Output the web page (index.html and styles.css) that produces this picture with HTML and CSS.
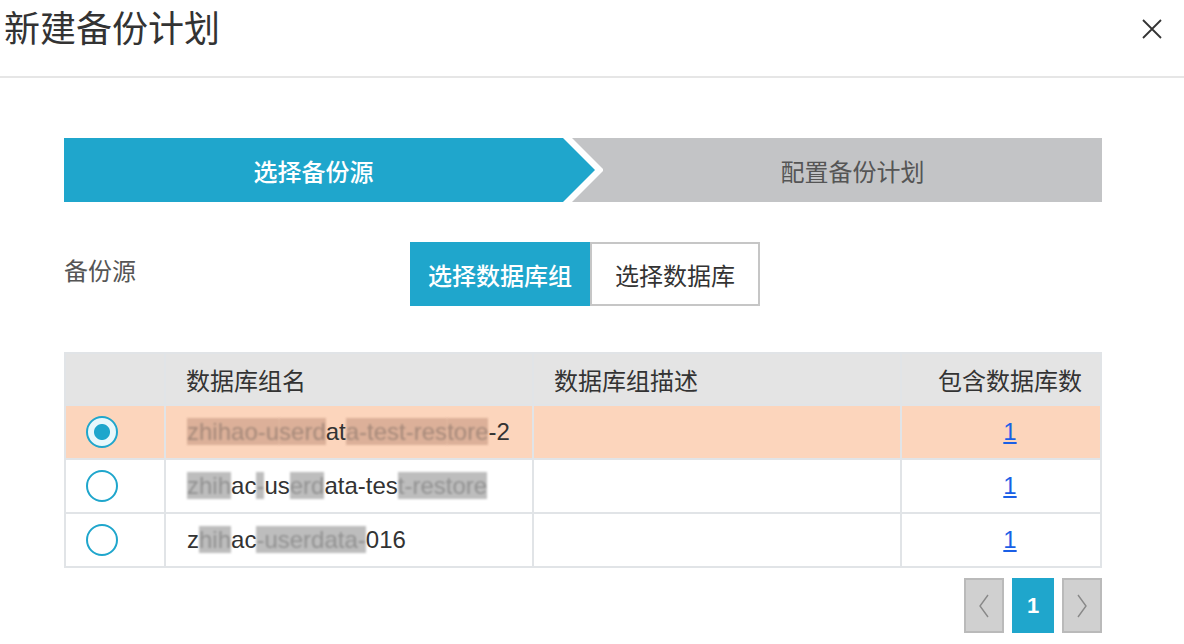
FILE: index.html
```html
<!DOCTYPE html>
<html lang="zh-CN">
<head>
<meta charset="utf-8">
<title>新建备份计划</title>
<link rel="stylesheet" href="styles.css">
</head>
<body>
<div class="dialog">
  <header class="dlg-head">
    <h1 class="dlg-title">新建备份计划</h1>
    <button class="close" aria-label="关闭">
      <svg width="20" height="20" viewBox="0 0 20 20"><path d="M1 1 L19 19 M19 1 L1 19" stroke="#333" stroke-width="1.8" fill="none"/></svg>
    </button>
  </header>
  <main class="dlg-body">
    <div class="steps">
      <div class="step step-active"><span class="step-text">选择备份源</span></div>
      <div class="step step-next"><span class="step-text">配置备份计划</span></div>
    </div>

    <div class="form-row">
      <div class="form-label">备份源</div>
      <div class="seg">
        <button class="seg-btn seg-on">选择数据库组</button>
        <button class="seg-btn seg-off">选择数据库</button>
      </div>
    </div>

    <table class="grid">
      <colgroup>
        <col class="c-radio"><col class="c-name"><col class="c-desc"><col class="c-count">
      </colgroup>
      <thead>
        <tr>
          <th></th>
          <th class="th-left">数据库组名</th>
          <th class="th-left">数据库组描述</th>
          <th class="th-right">包含数据库数</th>
        </tr>
      </thead>
      <tbody>
        <tr class="row-sel">
          <td class="td-radio"><span class="radio radio-on"></span></td>
          <td class="td-name"><span class="m">zhihao-u</span><span class="m">serd</span>at<span class="m">a-test-res</span><span class="m">tore</span>-2</td>
          <td></td>
          <td class="td-count"><a href="#" class="link">1</a></td>
        </tr>
        <tr>
          <td class="td-radio"><span class="radio"></span></td>
          <td class="td-name"><span class="m">zhih</span>ac<span class="m">-</span>us<span class="m">erd</span>ata-tes<span class="m">t-restore</span></td>
          <td></td>
          <td class="td-count"><a href="#" class="link">1</a></td>
        </tr>
        <tr>
          <td class="td-radio"><span class="radio"></span></td>
          <td class="td-name">z<span class="m">hih</span>ac<span class="m">-userdata-</span>016</td>
          <td></td>
          <td class="td-count"><a href="#" class="link">1</a></td>
        </tr>
      </tbody>
    </table>

    <div class="pager">
      <button class="pg pg-nav" aria-label="上一页">
        <svg width="12" height="24" viewBox="0 0 12 24"><polyline points="10,1 2,12 10,23" fill="none" stroke="#888" stroke-width="1.4"/></svg>
      </button>
      <button class="pg pg-cur">1</button>
      <button class="pg pg-nav" aria-label="下一页">
        <svg width="12" height="24" viewBox="0 0 12 24"><polyline points="2,1 10,12 2,23" fill="none" stroke="#888" stroke-width="1.4"/></svg>
      </button>
    </div>
  </main>
</div>
</body>
</html>
```

FILE: styles.css
```css
html, body {
  margin: 0;
  padding: 0;
  background: #fff;
}
body {
  font-family: "Liberation Sans", "Noto Sans CJK SC", sans-serif;
  color: #333;
}
.dialog {
  width: 1184px;
  height: 644px;
  overflow: hidden;
}
.dlg-head {
  height: 76px;
  border-bottom: 2px solid #e6e6e6;
  display: flex;
  justify-content: space-between;
  align-items: flex-start;
  padding: 0 22px 0 4px;
}
.dlg-title {
  margin: 12px 0 0 0;
  font-size: 36px;
  line-height: 36px;
  font-weight: normal;
  color: #333;
}
.close {
  margin-top: 19px;
  padding: 0;
  border: 0;
  background: transparent;
  width: 20px;
  height: 20px;
  display: block;
}
.close svg { display: block; }

.dlg-body {
  padding: 60px 82px 0 64px;
}

/* steps */
.steps {
  display: flex;
  height: 64px;
  background: #c3c4c6;
}
.step {
  display: flex;
  align-items: center;
  justify-content: center;
  font-size: 24px;
}
.step-active {
  position: relative;
  flex: none;
  width: 539px;
  padding-right: 40px;
  box-sizing: border-box;
  color: #fff;
  font-weight: 500;
}
.step-active::before,
.step-active::after {
  content: "";
  position: absolute;
  left: 0; top: 0; right: 0; bottom: 0;
}
.step-active::before {
  background: #fff;
  clip-path: polygon(0 0, 508px 0, 540px 32px, 508px 64px, 0 64px);
}
.step-active::after {
  background: #1fa6cc;
  clip-path: polygon(0 0, 499px 0, 531px 32px, 499px 64px, 0 64px);
}
.step-text {
  position: relative;
  z-index: 1;
}
.step-next {
  flex: 1;
  color: #555;
}

/* form row */
.form-row {
  display: flex;
  align-items: center;
  margin-top: 40px;
}
.form-label {
  width: 346px;
  font-size: 24px;
  color: #555;
  margin-top: -9px;
}
.seg {
  display: flex;
}
.seg-btn {
  height: 64px;
  font-family: inherit;
  font-size: 24px;
  padding: 0;
  margin: 0;
  box-sizing: border-box;
  cursor: pointer;
}
.seg-on {
  width: 180px;
  background: #1fa6cc;
  color: #fff;
  border: 0;
  font-weight: 500;
}
.seg-off {
  width: 170px;
  background: #fff;
  color: #333;
  border: 2px solid #c6c6c6;
}

/* table */
.grid {
  margin-top: 46px;
  width: 1036px;
  border-collapse: collapse;
  table-layout: fixed;
  font-size: 24px;
  border: 2px solid #e1e4e7;
}
.c-radio { width: 100px; }
.c-name { width: 368px; }
.c-desc { width: 368px; }
.c-count { width: 200px; }
.grid th {
  height: 50px;
  background: #e4e4e4;
  font-weight: normal;
  color: #333;
  border: 2px solid #e1e4e7;
  border-top: 0;
  border-bottom: 0;
  padding: 0 20px;
}
.th-left { text-align: left; }
.th-right { text-align: right; padding-right: 18px !important; }
.grid td {
  height: 52px;
  border: 2px solid #e1e4e7;
  padding: 0 20px;
  color: #333;
  white-space: nowrap;
  overflow: hidden;
}
.row-sel td {
  background: #fcd5bc;
}
.td-radio {
  padding-left: 20px !important;
}
.radio {
  display: block;
  width: 32px;
  height: 32px;
  box-sizing: border-box;
  border: 2.5px solid #1fa6cc;
  border-radius: 50%;
  background: #fff;
}
.radio-on {
  background: radial-gradient(circle, #1fa6cc 0 7.5px, #e8f8fc 8.5px);
}
.td-name {
  padding-left: 21px !important;
}
.m {
  background: rgba(135, 135, 135, 0.55);
  color: rgba(60, 60, 60, 0.35);
  filter: blur(0.8px);
}
.row-sel .m {
  background: rgba(160, 110, 90, 0.35);
}
.td-count {
  text-align: center;
  padding-left: 38px !important;
  padding-right: 20px !important;
}
.link {
  color: #1a5fe6;
  text-decoration: underline;
}

/* pager */
.pager {
  display: flex;
  justify-content: flex-end;
  gap: 8px;
  margin-top: 10px;
}
.pg {
  height: 55px;
  margin: 0;
  padding: 0;
  display: flex;
  align-items: center;
  justify-content: center;
  box-sizing: border-box;
  font-family: inherit;
}
.pg-nav {
  width: 40px;
  background: #d0d0d0;
  border: 2px solid #bababa;
}
.pg-cur {
  width: 42px;
  background: #1fa6cc;
  border: 0;
  color: #fff;
  font-size: 22px;
  font-weight: bold;
}
```
